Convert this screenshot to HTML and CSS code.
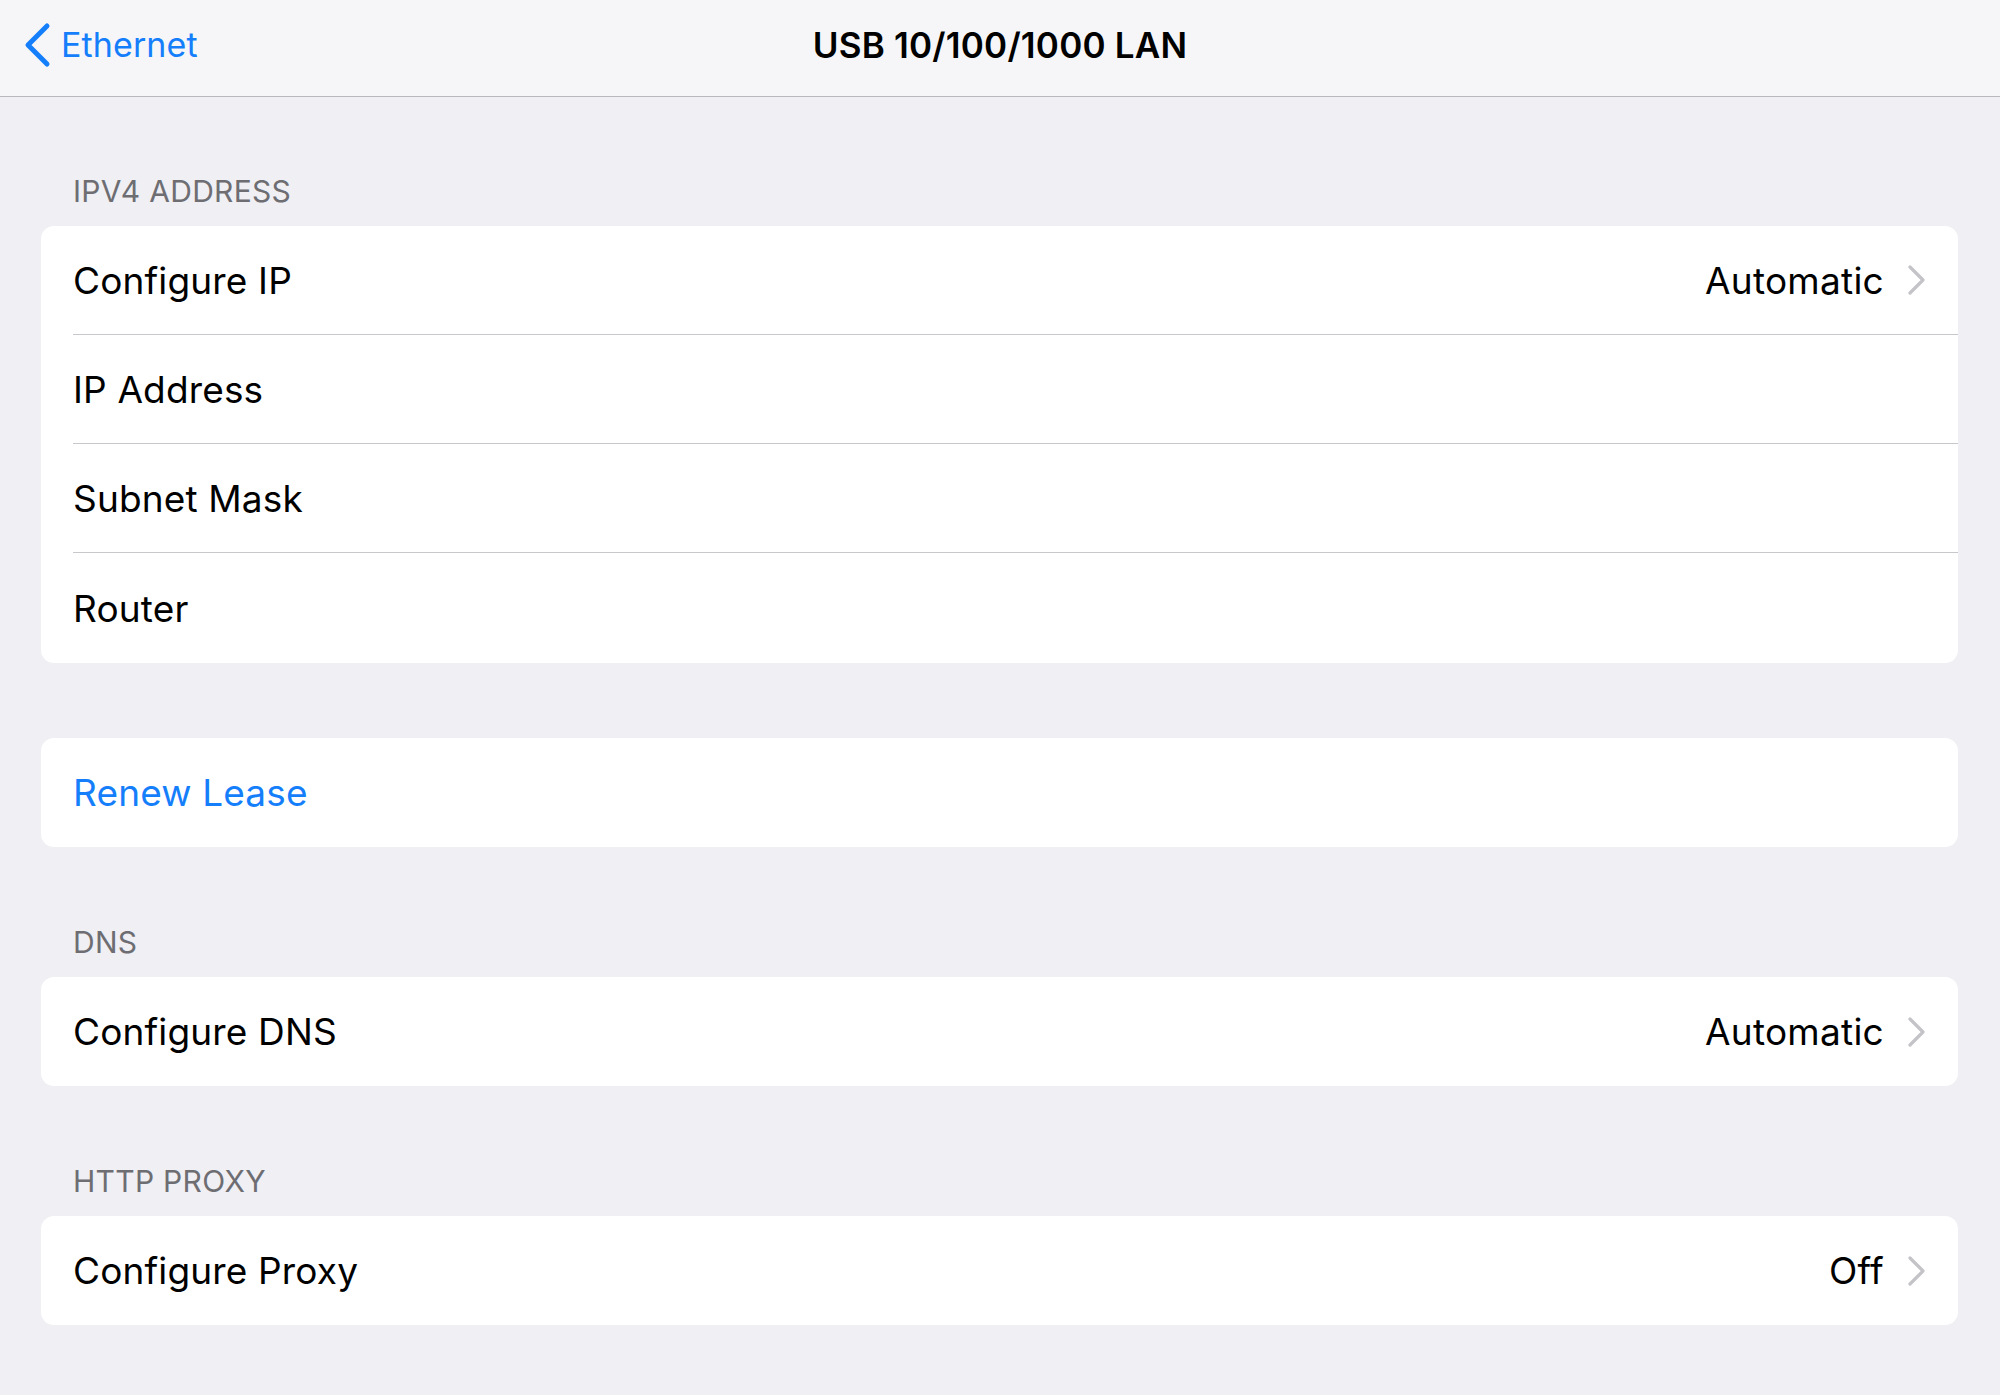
FILE: index.html
```html
<!DOCTYPE html>
<html lang="en">
<head>
<meta charset="utf-8">
<title>USB 10/100/1000 LAN</title>
<link rel="stylesheet" href="styles.css">
</head>
<body>
<header class="nav">
  <div class="nav-left">
    <a class="back" href="#">
      <svg class="back-icon" width="30" height="46" viewBox="0 0 30 46" aria-hidden="true">
        <polyline points="24,4 5,23 24,42" fill="none" stroke="#157efb" stroke-width="5" stroke-linecap="round" stroke-linejoin="round"/>
      </svg>
      <span>Ethernet</span>
    </a>
  </div>
  <h1 class="nav-title">USB 10/100/1000 LAN</h1>
  <div class="nav-right"></div>
</header>

<main class="content">
  <section class="group">
    <h2 class="group-header">IPV4 ADDRESS</h2>
    <div class="card">
      <div class="row"><div class="row-inner"><span class="label">Configure IP</span><span class="value">Automatic</span><svg class="chev" width="18" height="30" viewBox="0 0 18 30" aria-hidden="true"><polyline points="2,2 15,15 2,28" fill="none" stroke="#c4c4c8" stroke-width="3.2" stroke-linecap="round" stroke-linejoin="round"/></svg></div></div>
      <div class="row"><div class="row-inner"><span class="label">IP Address</span></div></div>
      <div class="row"><div class="row-inner"><span class="label">Subnet Mask</span></div></div>
      <div class="row"><div class="row-inner row-last"><span class="label">Router</span></div></div>
    </div>
  </section>

  <section class="group group-plain">
    <div class="card">
      <div class="row"><div class="row-inner"><span class="label link">Renew Lease</span></div></div>
    </div>
  </section>

  <section class="group">
    <h2 class="group-header">DNS</h2>
    <div class="card">
      <div class="row"><div class="row-inner"><span class="label">Configure DNS</span><span class="value">Automatic</span><svg class="chev" width="18" height="30" viewBox="0 0 18 30" aria-hidden="true"><polyline points="2,2 15,15 2,28" fill="none" stroke="#c4c4c8" stroke-width="3.2" stroke-linecap="round" stroke-linejoin="round"/></svg></div></div>
    </div>
  </section>

  <section class="group">
    <h2 class="group-header">HTTP PROXY</h2>
    <div class="card">
      <div class="row"><div class="row-inner"><span class="label">Configure Proxy</span><span class="value">Off</span><svg class="chev" width="18" height="30" viewBox="0 0 18 30" aria-hidden="true"><polyline points="2,2 15,15 2,28" fill="none" stroke="#c4c4c8" stroke-width="3.2" stroke-linecap="round" stroke-linejoin="round"/></svg></div></div>
    </div>
  </section>
</main>
</body>
</html>
```

FILE: styles.css
```css
* { box-sizing: border-box; }

html, body {
  margin: 0;
  padding: 0;
}

body {
  background: #efeff4;
  font-family: Inter, "Noto Sans", "Liberation Sans", sans-serif;
  color: #000;
  width: 2000px;
  min-height: 1395px;
}

.nav {
  height: 97px;
  background: #f6f6f8;
  border-bottom: 1px solid #b9b9bc;
  display: grid;
  grid-template-columns: 1fr auto 1fr;
  align-items: center;
  padding-bottom: 7px;
}

.nav-left {
  display: flex;
  align-items: center;
  padding-left: 23px;
}

.back {
  display: flex;
  align-items: center;
  gap: 8px;
  text-decoration: none;
  color: #157efb;
  font-size: 34px;
  font-weight: 400;
  letter-spacing: 0.1px;
}

.back-icon {
  display: block;
}

.nav-title {
  margin: 0;
  font-size: 35px;
  font-weight: 600;
  letter-spacing: 0.2px;
  color: #000;
}

.content {
  padding: 0 42px 0 41px;
}

.group {
  margin-top: 77px;
}

.group:first-child {
  margin-top: 76px;
}

.group-plain {
  margin-top: 75px;
}

.group-header {
  margin: 0 0 17px 0;
  padding-left: 32px;
  font-size: 30px;
  line-height: 36px;
  font-weight: 400;
  color: #6d6d72;
  letter-spacing: 0.3px;
}

.card {
  background: #fff;
  border-radius: 13px;
  overflow: hidden;
}

.row {
  padding-left: 32px;
}

.row-inner {
  height: 109px;
  border-bottom: 1px solid #c8c7cc;
  display: flex;
  align-items: center;
  padding-right: 32px;
}

.row:last-child .row-inner {
  border-bottom: none;
}

.row-last {
  height: 110px;
}

.label {
  flex: 1;
  font-size: 37px;
  letter-spacing: 0.15px;
}

.link {
  color: #157efb;
}

.value {
  font-size: 37px;
  letter-spacing: 0.25px;
  margin-right: 24px;
}

.chev {
  display: block;
}
```
